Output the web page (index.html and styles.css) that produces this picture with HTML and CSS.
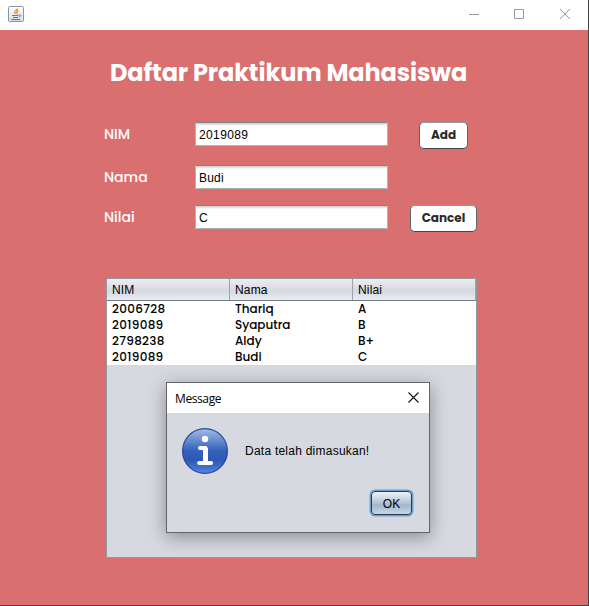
FILE: index.html
```html
<!DOCTYPE html>
<html lang="id">
<head>
<meta charset="utf-8">
<title>Daftar Praktikum Mahasiswa</title>
<link rel="stylesheet" href="styles.css">
</head>
<body>
<div class="window">
  <header class="titlebar">
    <svg class="java" width="16" height="16" viewBox="0 0 16 16">
      <defs><linearGradient id="jb" x1="0" y1="0" x2="0" y2="1"><stop offset="0" stop-color="#fff"/><stop offset="1" stop-color="#d3dde6"/></linearGradient></defs>
      <rect x=".5" y=".5" width="15" height="15" rx="1" fill="url(#jb)" stroke="#8197aa"/>
      <path d="M9.600 2.500C9.600 4.200 6.300 4.600 6.600 6.500c.1.600.7.800.8 1.500M10.600 4.600C8.700 5 8.400 6 9 6.800c.3.500 0 .9-.4 1.200" fill="none" stroke="#f08a24" stroke-width="1.300"/>
      <path d="M4 9.500h6.500M5 11.500h5M3.500 13.500h8.500M10.800 8.800c2.700-.5 2.500 1.700 0 2.300" fill="none" stroke="#54799c" stroke-width="1"/>
    </svg>
    <svg class="controls" width="102" height="12" viewBox="0 0 102 12" fill="none" stroke="#999">
      <path d="M0 6.500h10M45.500 1.500h9v9h-9zM91 1l10 10M101 1L91 11"/>
    </svg>
  </header>
  <main class="content">
    <h1>Daftar Praktikum Mahasiswa</h1>
    <form class="form">
      <label>NIM</label><div class="field digits">2019089</div><button type="button" class="btn add">Add</button>
      <label>Nama</label><div class="field">Budi</div><span></span>
      <label>Nilai</label><div class="field">C</div><button type="button" class="btn cancel">Cancel</button>
    </form>
    <section class="table">
      <div class="row head"><span>NIM</span><span>Nama</span><span>Nilai</span></div>
      <div class="row"><span class="num">2006728</span><span>Thariq</span><span>A</span></div>
      <div class="row"><span class="num">2019089</span><span>Syaputra</span><span>B</span></div>
      <div class="row"><span class="num">2798238</span><span>Aldy</span><span>B+</span></div>
      <div class="row"><span class="num">2019089</span><span>Budi</span><span>C</span></div>
    </section>
  </main>
  <div class="dialog" role="dialog">
    <div class="dialog-title"><span>Message</span>
      <svg width="11" height="11" viewBox="0 0 11 11" stroke="#111" stroke-width="1.100"><path d="M.5.5l10 10M10.500.5l-10 10"/></svg>
    </div>
    <div class="message">
      <svg width="46" height="46" viewBox="0 0 46 46">
        <defs><linearGradient id="ib" x1="0" y1="0" x2="0" y2="1"><stop offset="0" stop-color="#a5bce5"/><stop offset=".48" stop-color="#3563bb"/><stop offset=".7" stop-color="#2a58b4"/><stop offset="1" stop-color="#5585e0"/></linearGradient></defs>
        <circle cx="23" cy="23" r="22.400" fill="url(#ib)" stroke="#26479a" stroke-width="1.200"/>
        <circle cx="23" cy="11" r="3.200" fill="#fff"/>
        <path d="M18 20h5.500v15M17.200 35h11.800" fill="none" stroke="#fff" stroke-width="4.200" stroke-linecap="round" stroke-linejoin="round"/>
        <path d="M23.500 20v15" stroke="#fff" stroke-width="5"/>
      </svg>
      <span>Data telah dimasukan!</span>
    </div>
    <button type="button" class="ok">OK</button>
  </div>
</div>
</body>
</html>
```
FILE: styles.css
```css
* { box-sizing: border-box; }
body { margin: 0; font: 12px/16px "Liberation Sans", Arial, sans-serif; color: #111; }
.window { position: relative; width: 589px; height: 606px; border: solid #444; border-width: 0 1px 1px 0; background: #d96f6f; overflow: hidden; }
.titlebar { height: 30px; background: #fff; display: flex; justify-content: space-between; padding: 6px 17px 0 8px; }
.controls { margin-top: 2px; }
.content { padding-left: 104px; font-family: Poppins, Inter, sans-serif; }
h1 { margin: 0; padding: 25px 0 0 6px; height: 92px; font-size: 24px; line-height: 36px; font-weight: 700; letter-spacing: -.12px; color: #fff; white-space: nowrap; }
.form { display: grid; grid-template-columns: 91px 193px 89px; grid-template-rows: 43px 40px 73px; align-items: start; }
.form label { color: #fff; font-size: 14px; font-weight: 500; line-height: 24px; }
.field { height: 24px; padding: 4px 3px; line-height: 16px; font-family: "Liberation Sans", Arial, sans-serif; font-size: 12px; letter-spacing: .2px; background: linear-gradient(#ccc, #fff 3px); border: 1px solid #b0b4b6; border-top-color: #7f8484; color: #000; }
.field.digits { letter-spacing: .38px; }
.btn { height: 27px; padding: 0; border: 1px solid #60656a; border-top-color: #92979c; border-bottom: 1.500px solid #42474c; border-radius: 5px; background: #fff; color: #2a2a2a; font: 700 12px/23px Poppins, Inter, sans-serif; justify-self: end; padding-bottom: 2px; }
.add { width: 49px; margin-right: 9px; }
.cancel { width: 67px; }
.table { width: 371px; height: 280px; margin-left: 2px; border: 1px solid #9297a1; background: #d6d9e0; color: #000; font-size: 12px; }
.row { display: grid; grid-template-columns: 123px 123px 123px; height: 16px; line-height: 16px; background: #fff; font-weight: 500; }
.row span { padding-left: 5px; }
.num { letter-spacing: .3px; }
.head { height: 22px; line-height: 22px; font-family: "Liberation Sans", Arial, sans-serif; font-weight: 400; letter-spacing: .15px; background: linear-gradient(#eceef1, #d7dae1 50%, #d7dae1 60%, #e8edf3); border-bottom: 1px solid #747a86; }
.head span { border-right: 1px solid #9da1aa; height: 21px; }
.dialog { position: absolute; left: 166px; top: 382px; width: 264px; height: 151px; border: 1px solid #656565; background: #d6d9e0; box-shadow: 0 4px 17px rgba(0, 0, 0, .36); display: flex; flex-direction: column; }
.dialog-title { height: 30px; background: #fff; display: flex; justify-content: space-between; padding: 9px 10px 0 8px; font: 12px/14px "Open Sans", "Noto Sans", sans-serif; color: #000; }
.dialog-title span { letter-spacing: -.4px; line-height: 13px; }
.message { display: flex; gap: 17px; align-items: center; padding: 15px 0 0 15px; color: #000; letter-spacing: .24px; }
.ok { width: 41px; height: 24px; margin: 17px 17px 0 auto; padding: 2px 0 0; border: 1px solid #27384b; border-radius: 4px; background: linear-gradient(#eff2f6, #b5c6d6 48%, #a3b7c9 60%, #c4d9ea); box-shadow: 0 0 0 1.500px #6da1d3; font: 12px/20px "Liberation Sans", Arial, sans-serif; }
```
